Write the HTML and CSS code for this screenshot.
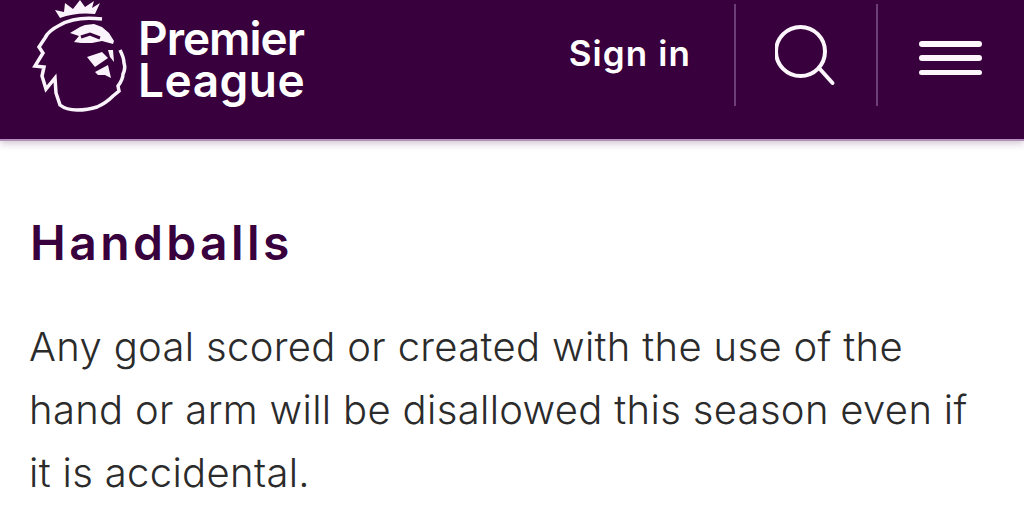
FILE: index.html
```html
<!DOCTYPE html>
<html lang="en">
<head>
<meta charset="utf-8">
<title>Handballs</title>
<link rel="stylesheet" href="styles.css">
</head>
<body>
<header class="bar">
  <a class="brand">
    <svg class="lion" viewBox="0 0 96 112" width="96" height="112" fill="none">
      <path class="fill" d="M26 18 L21 10 L30 12 L31 3 L39 9 L46 0 L51 7 L60 1 L58 8 L66 3 L61 14 Q42 12 26 18Z"/>
      <path class="stroke" d="M68 19 C52 17 36 19 26 25 C18 29 13 33 11 38 L5 47 L9 53 L1 66 L10 67 L8 76 L12 89 L21 78 L22 93 L26 105 C31 109 37 110 43 110 C50 110 57 109 63 107 C70 104 75 100 79 96 L85 91 L84 86 C87 82 89 78 89 74 C91 70 91 66 90 63 C90 58 88 54 86 50"/>
      <path class="fill" d="M36 33 L46 27 L51 25 L60 24 L68 27 L75 33 L80 41 L79 44 L68 41 L58 43 L47 43 L40 42 L45 36Z"/>
      <path class="slit" d="M47 37 L56 34 L66 38"/>
      <path class="fill" d="M53 57 L68 52 L74 58 L61 67Z"/>
      <path class="fill" d="M74 50 L79 50 L80 62 L76 57Z"/>
      <path class="fill" d="M61 72 L74 65 L77 78 L71 75 L64 75Z"/>
    </svg>
    <span class="wordmark"><span class="wm-top">Premier</span><span class="wm-bottom">League</span></span>
  </a>
  <nav class="tools">
    <a class="signin">Sign in</a>
    <span class="cell cell-search">
      <svg viewBox="0 0 62 62" width="62" height="62" fill="none">
        <circle class="icon-line" cx="25.5" cy="27.5" r="24.5"/>
        <path class="icon-line" d="M44 44 L57.5 59" />
      </svg>
    </span>
    <span class="cell cell-menu">
      <span class="burger"><i></i><i></i><i></i></span>
    </span>
  </nav>
</header>
<main class="content">
  <h1>Handballs</h1>
  <p>Any goal scored or created with the use of the<br>hand or arm will be disallowed this season even if<br>it is accidental.</p>
</main>
</body>
</html>
```
FILE: styles.css
```css
html, body {
  margin: 0;
  padding: 0;
  background: #fff;
  overflow: hidden;
}
body {
  width: 1024px;
  height: 530px;
  font-family: "Inter", "Liberation Sans", sans-serif;
}
.bar {
  height: 139px;
  background: #38003c;
  border-bottom: 2px solid #b58fbb;
  box-shadow: 0 3px 7px rgba(60, 20, 60, 0.22);
  display: flex;
  justify-content: space-between;
  padding-left: 34px;
}
.brand {
  display: flex;
  align-items: flex-start;
  gap: 8px;
  height: 112px;
  color: #fff;
}
.lion {
  flex: none;
  overflow: visible;
}
.fill { fill: #fbf3fb; }
.stroke {
  stroke: #fbf3fb;
  stroke-width: 3.5;
  stroke-linejoin: miter;
}
.slit {
  stroke: #38003c;
  stroke-width: 3;
}
.wordmark {
  display: flex;
  flex-direction: column;
  font-family: "Inter", sans-serif;
  font-weight: 600;
  font-size: 46px;
  line-height: 42px;
  padding-top: 17px;
}
.wm-top {
  letter-spacing: -1px;
}
.wm-bottom {
  letter-spacing: 0.5px;
}
.tools {
  display: flex;
  align-items: flex-start;
  padding-top: 4px;
  padding-right: 42px;
}
.signin {
  color: #fff;
  font-family: "Inter", sans-serif;
  font-weight: 600;
  font-size: 35px;
  line-height: 44px;
  letter-spacing: 1.1px;
  padding-top: 27px;
  margin-right: 43px;
}
.cell {
  height: 102px;
  border-left: 2px solid #6d3f76;
  display: flex;
  box-sizing: border-box;
}
.cell-search {
  width: 142px;
  padding: 20px 0 0 39px;
}
.icon-line {
  stroke: #fdf6fd;
  stroke-width: 4;
  stroke-linecap: round;
}
.cell-menu {
  padding: 37px 0 0 41px;
}
.burger {
  display: flex;
  flex-direction: column;
  gap: 8.9px;
  width: 63px;
}
.burger i {
  display: block;
  height: 5.5px;
  border-radius: 3px;
  background: #fdf6fd;
}
.content {
  padding: 74px 30px 0;
}
h1 {
  margin: 0;
  color: #38003c;
  font-weight: 600;
  font-size: 48px;
  line-height: 56px;
  letter-spacing: 3.4px;
}
p {
  margin: 44px 0 0 -1px;
  color: #2b2b2b;
  font-weight: 300;
  font-size: 40px;
  line-height: 63px;
  letter-spacing: 0.33px;
  white-space: nowrap;
}
```
